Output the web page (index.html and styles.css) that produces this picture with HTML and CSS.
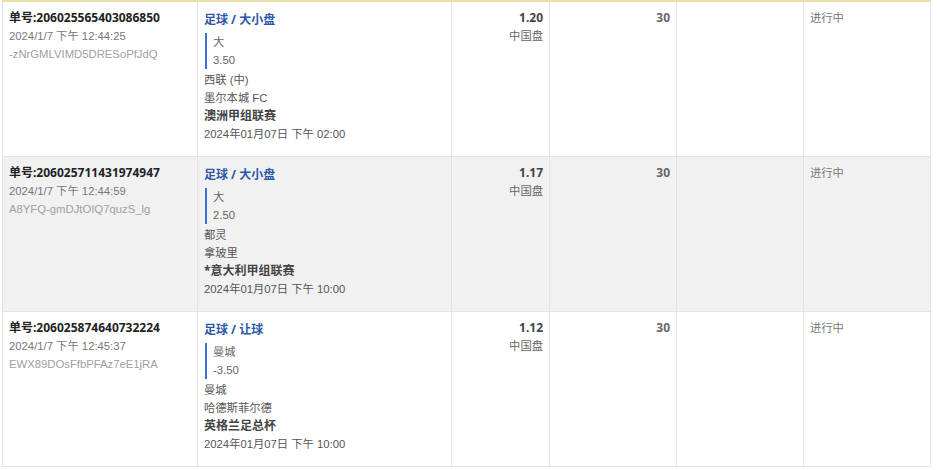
FILE: index.html
```html
<!DOCTYPE html>
<html lang="zh">
<head>
<meta charset="utf-8">
<link rel="stylesheet" href="styles.css">
</head>
<body>
<table class="bets">
  <colgroup>
    <col class="c-id"><col class="c-info"><col class="c-odds"><col class="c-stake"><col class="c-win"><col class="c-status">
  </colgroup>
  <tbody>
    <tr>
      <td class="id">
        <div class="no">单号:206025565403086850</div>
        <div class="time">2024/1/7 下午 12:44:25</div>
        <div class="hash">-zNrGMLVIMD5DRESoPfJdQ</div>
      </td>
      <td class="info">
        <div class="sport">足球 / 大小盘</div>
        <div class="pick"><div>大</div><div>3.50</div></div>
        <div>西联 (中)</div>
        <div>墨尔本城 FC</div>
        <div class="league">澳洲甲组联赛</div>
        <div>2024年01月07日 下午 02:00</div>
      </td>
      <td class="odds"><div class="val">1.20</div><div>中国盘</div></td>
      <td class="stake">30</td>
      <td></td>
      <td class="status">进行中</td>
    </tr>
    <tr class="alt">
      <td class="id">
        <div class="no">单号:206025711431974947</div>
        <div class="time">2024/1/7 下午 12:44:59</div>
        <div class="hash">A8YFQ-gmDJtOIQ7quzS_lg</div>
      </td>
      <td class="info">
        <div class="sport">足球 / 大小盘</div>
        <div class="pick"><div>大</div><div>2.50</div></div>
        <div>都灵</div>
        <div>拿玻里</div>
        <div class="league">*意大利甲组联赛</div>
        <div>2024年01月07日 下午 10:00</div>
      </td>
      <td class="odds"><div class="val">1.17</div><div>中国盘</div></td>
      <td class="stake">30</td>
      <td></td>
      <td class="status">进行中</td>
    </tr>
    <tr>
      <td class="id">
        <div class="no">单号:206025874640732224</div>
        <div class="time">2024/1/7 下午 12:45:37</div>
        <div class="hash">EWX89DOsFfbPFAz7eE1jRA</div>
      </td>
      <td class="info">
        <div class="sport">足球 / 让球</div>
        <div class="pick"><div>曼城</div><div>-3.50</div></div>
        <div>曼城</div>
        <div>哈德斯菲尔德</div>
        <div class="league">英格兰足总杯</div>
        <div>2024年01月07日 下午 10:00</div>
      </td>
      <td class="odds"><div class="val">1.12</div><div>中国盘</div></td>
      <td class="stake">30</td>
      <td></td>
      <td class="status">进行中</td>
    </tr>
  </tbody>
</table>
</body>
</html>
```
FILE: styles.css
```css
html, body {
  margin: 0;
  padding: 0;
  background: #fff;
}
body {
  padding-left: 2px;
  font-family: "Liberation Sans", "Noto Sans CJK SC", sans-serif;
  font-size: 11.3px;
  line-height: 18px;
  color: #555;
}
.bets {
  width: 928px;
  border-collapse: collapse;
  table-layout: fixed;
  border-top: 2px solid #e9dfa9;
}
.c-id { width: 195px; }
.c-info { width: 254px; }
.c-odds { width: 98px; }
.c-stake { width: 127px; }
.c-win { width: 127px; }
.c-status { width: 127px; }
.bets td {
  vertical-align: top;
  border: 1px solid #e3e3e3;
  border-top: none;
  padding: 7px 6px 11px 6px;
  height: 136px;
}
.bets tr + tr td { border-top: 1px solid #e3e3e3; }
.bets tr.alt td { background: #f1f1f1; }
.no {
  font-family: "Noto Sans", "Noto Sans CJK SC", sans-serif;
  font-size: 12px;
  font-weight: bold;
  color: #222;
}
.time { color: #777; }
.hash { color: #a0a0a0; }
.sport {
  font-family: "Noto Sans", "Noto Sans CJK SC", sans-serif;
  font-weight: bold;
  color: #2b57a8;
  font-size: 12px;
  margin-top: 2px;
}
.pick {
  border-left: 2px solid #3e6fd4;
  padding-left: 6px;
  margin: 4px 0 2px 1px;
  color: #666;
}
.league {
  font-family: "Noto Sans", "Noto Sans CJK SC", sans-serif;
  font-size: 12px;
  font-weight: bold;
  color: #444;
}
.odds { text-align: right; color: #666; }
.odds .val {
  font-family: "Noto Sans", "Noto Sans CJK SC", sans-serif;
  font-size: 12px;
  font-weight: bold;
  color: #444;
}
.stake {
  text-align: right;
  font-family: "Noto Sans", "Noto Sans CJK SC", sans-serif;
  font-size: 12px;
  font-weight: bold;
  color: #666;
}
.status { color: #777; }
```
